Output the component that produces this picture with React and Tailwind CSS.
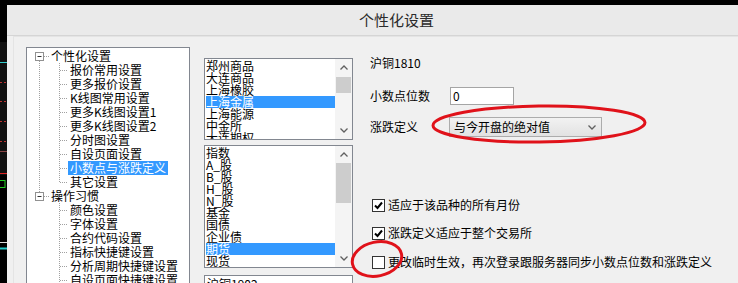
import React from 'react';

const tree = [
  { t: '个性化设置', root: true, first: true },
  { t: '报价常用设置' },
  { t: '更多报价设置' },
  { t: 'K线图常用设置' },
  { t: '更多K线图设置1' },
  { t: '更多K线图设置2' },
  { t: '分时图设置' },
  { t: '自设页面设置' },
  { t: '小数点与涨跌定义', sel: true },
  { t: '其它设置', last: true },
  { t: '操作习惯', root: true },
  { t: '颜色设置', g2: true },
  { t: '字体设置', g2: true },
  { t: '合约代码设置', g2: true },
  { t: '指标快捷键设置', g2: true },
  { t: '分析周期快捷键设置', g2: true },
  { t: '自设页面快捷键设置', g2: true },
];

const markets = ['郑州商品', '大连商品', '上海橡胶', '上海金属', '上海能源', '中金所', '大连期权'];
const kinds = ['指数', 'A_股', 'B_股', 'H_股', 'N_股', '基金', '国债', '企业债', '期货', '现货'];

const dot = { stroke: '#a0a0a0', strokeWidth: 1, strokeDasharray: '1 1' };

const TreeRow = ({ row }) => {
  if (row.root) {
    return (
      <div className="flex h-[14px] leading-[14px]">
        <svg width="24" height="14" className="shrink-0">
          {row.first ? <line x1="12.5" y1="12" x2="12.5" y2="14" {...dot} /> : <line x1="12.5" y1="0" x2="12.5" y2="3" {...dot} />}
          <rect x="8.5" y="3.5" width="8" height="8" fill="#fff" stroke="#919191" />
          <line x1="10.5" y1="7.5" x2="14.5" y2="7.5" stroke="#333" />
          <line x1="17" y1="7.5" x2="23" y2="7.5" {...dot} />
        </svg>
        <span className="whitespace-nowrap">{row.t}</span>
      </div>
    );
  }
  return (
    <div className="flex h-[14px] leading-[14px]">
      <svg width="41" height="14" className="shrink-0">
        {!row.g2 && <line x1="12.5" y1="0" x2="12.5" y2="14" {...dot} />}
        <line x1="32.5" y1="0" x2="32.5" y2={row.last ? 8 : 14} {...dot} />
        <line x1="33" y1="7.5" x2="41" y2="7.5" {...dot} />
      </svg>
      <span className={`whitespace-nowrap px-[2px] ${row.sel ? 'bg-[#3399ff] text-white' : ''}`}>{row.t}</span>
    </div>
  );
};

const Chevron = ({ up }) => (
  <svg width="8" height="5" viewBox="0 0 8 5">
    <path d={up ? 'M0.5 4.5 L4 1 L7.5 4.5' : 'M0.5 0.5 L4 4 L7.5 0.5'} fill="none" stroke="#606060" strokeWidth="1.3" />
  </svg>
);

const ListBox = ({ items, selected, height, thumbTop, thumbH }) => (
  <div className="flex w-[149px] border border-[#828790] bg-white" style={{ height }}>
    <div className="flex-1 overflow-hidden pl-[1px] pt-[1px]">
      {items.map((it) => (
        <div
          key={it}
          className={`h-[12px] leading-[12px] whitespace-nowrap ${it === selected ? 'bg-[#3399ff] text-white' : ''}`}
        >
          {it}
        </div>
      ))}
    </div>
    <div className="flex w-[17px] flex-col bg-[#f4f4f4]">
      <div className="flex h-[17px] shrink-0 items-center justify-center">
        <Chevron up />
      </div>
      <div className="flex-1 px-[1px]">
        <div className="bg-[#cdcdcd]" style={{ marginTop: thumbTop, height: thumbH }} />
      </div>
      <div className="flex h-[17px] shrink-0 items-center justify-center">
        <Chevron />
      </div>
    </div>
  </div>
);

const CheckBox = ({ checked, label }) => (
  <div className="flex h-[16px] items-center gap-[3px] pl-[2px] whitespace-nowrap">
    <div className="flex h-[13px] w-[13px] items-center justify-center border border-[#333] bg-white">
      {checked && (
        <svg width="11" height="11" viewBox="0 0 11 11">
          <path d="M2 5.5 L4.5 8 L9 2.5" fill="none" stroke="#000" strokeWidth="2" />
        </svg>
      )}
    </div>
    <span>{label}</span>
  </div>
);

const LeftStrip = () => (
  <svg width="7" height="278" className="shrink-0 bg-black">
    <rect x="0" y="37" width="7" height="133" fill="#111" />
    <line x1="0" y1="57.5" x2="7" y2="57.5" stroke="#3cc" />
    <line x1="0" y1="77.5" x2="7" y2="77.5" stroke="#b33" strokeDasharray="2 2" />
    <line x1="0" y1="96.5" x2="7" y2="96.5" stroke="#b33" strokeDasharray="2 2" />
    <line x1="0" y1="116.5" x2="7" y2="116.5" stroke="#b33" strokeDasharray="2 2" />
    <line x1="0" y1="136.5" x2="7" y2="136.5" stroke="#b33" strokeDasharray="2 2" />
    <line x1="0" y1="146.5" x2="7" y2="146.5" stroke="#844" />
    <line x1="0" y1="168.5" x2="7" y2="168.5" stroke="#d22" />
    <rect x="-1" y="175.5" width="6" height="7" fill="none" stroke="#2c2" />
    <line x1="0" y1="237.5" x2="7" y2="237.5" stroke="#ddd" />
    <line x1="0" y1="243.5" x2="7" y2="243.5" stroke="#2cc" strokeWidth="2" />
  </svg>
);

export default function App() {
  return (
    <div className="relative h-[283px] w-[738px] overflow-hidden bg-black font-['Noto_Sans_CJK_SC',sans-serif] text-[12px] text-black">
      <div className="h-[5px]" />
      <div className="flex h-[278px]">
        <LeftStrip />
        <div className="flex flex-1 flex-col bg-[#f0f0f0]">
          <div className="flex h-[31px] shrink-0 items-center border-b border-[#d5d5d5] bg-[#eaeaea] pl-[352px] text-[15px] text-[#2b2b2b]">
            个性化设置
          </div>
          <div className="flex-1 pl-[6px]">
            <div className="flex h-full border-l border-t border-[#e4e4e4] pl-[12px] pt-[10px]">
              {/* tree */}
              <div className="h-[260px] w-[164px] shrink-0 overflow-hidden border border-[#828790] bg-white pt-[1px]">
                {tree.map((r) => (
                  <TreeRow key={r.t} row={r} />
                ))}
              </div>

              {/* lists */}
              <div className="ml-[14px] flex shrink-0 flex-col pt-[11px]">
                <ListBox items={markets} selected="上海金属" height={82} thumbTop={1} thumbH={16} />
                <div className="mt-[5px]">
                  <ListBox items={kinds} selected="期货" height={123} thumbTop={0} thumbH={40} />
                </div>
                <div className="mt-[7px] h-[20px] w-[149px] border border-[#828790] bg-white pl-[2px] leading-[16px]">
                  沪铜1902
                </div>
              </div>

              {/* right settings */}
              <div className="ml-[17px] flex flex-col">
                <div className="mt-[8px] h-[16px] leading-[16px]">沪铜1810</div>
                <div className="mt-[16px] flex h-[18px] items-center">
                  <span className="w-[80px]">小数点位数</span>
                  <div className="h-[18px] w-[64px] border border-[#a5a5a5] bg-white pl-[2px] leading-[16px]">0</div>
                </div>
                <div className="mt-[12px] flex h-[20px] items-center">
                  <span className="w-[79px]">涨跌定义</span>
                  <div className="flex h-[20px] w-[153px] items-center justify-between border border-[#acacac] bg-gradient-to-b from-[#f2f2f2] to-[#e2e2e2] pl-[4px] pr-[5px]">
                    <span>与今开盘的绝对值</span>
                    <Chevron />
                  </div>
                </div>
                <div className="mt-[60px]">
                  <CheckBox checked label="适应于该品种的所有月份" />
                </div>
                <div className="mt-[12px]">
                  <CheckBox checked label="涨跌定义适应于整个交易所" />
                </div>
                <div className="mt-[13px]">
                  <CheckBox label="更改临时生效，再次登录跟服务器同步小数点位数和涨跌定义" />
                </div>
              </div>
            </div>
          </div>
        </div>
      </div>

      {/* red annotation marks */}
      <svg className="pointer-events-none absolute left-0 top-0" width="738" height="283">
        <ellipse cx="539" cy="124" rx="106" ry="18" fill="none" stroke="#e0121a" strokeWidth="3" transform="rotate(-0.8 539 124)" />
        <ellipse cx="377" cy="259" rx="25" ry="17" fill="none" stroke="#e0121a" strokeWidth="3" transform="rotate(-12 377 259)" />
      </svg>
    </div>
  );
}
